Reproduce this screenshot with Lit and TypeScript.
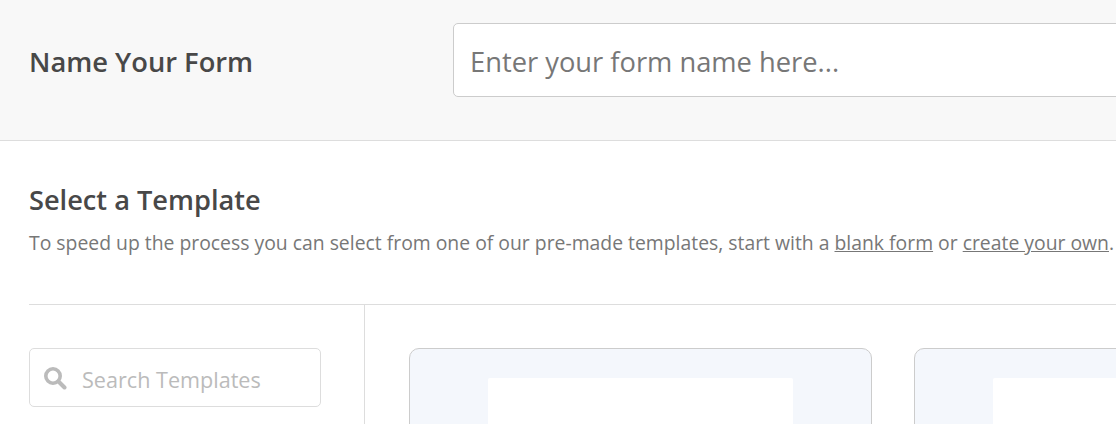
import { LitElement, html, css } from 'lit'
import { customElement } from 'lit/decorators.js'

@customElement('app-root')
export class AppRoot extends LitElement {
  static styles = css`
    :host {
      display: block;
      width: 1116px;
      height: 424px;
      overflow: hidden;
      background: #fff;
      font-family: 'Open Sans', sans-serif;
      color: #444;
    }
    .name-bar {
      display: flex;
      align-items: flex-start;
      height: 117px;
      padding: 23px 0 0 29px;
      background: #f8f8f8;
      border-bottom: 1px solid #ddd;
    }
    .name-label {
      width: 424px;
      flex-shrink: 0;
      padding-top: 21px;
      font-size: 27.3px;
      font-weight: 600;
      line-height: 36px;
      color: #484848;
    }
    .name-input {
      flex-shrink: 0;
      box-sizing: border-box;
      width: 800px;
      height: 74px;
      padding: 2px 16px 0;
      background: #fff;
      border: 1px solid #ccc;
      border-radius: 5px;
      font: 27.3px 'Open Sans', sans-serif;
      color: #444;
      outline: none;
    }
    .name-input::placeholder {
      color: #777;
      opacity: 1;
    }
    .intro {
      padding: 41px 0 0 29px;
      white-space: nowrap;
    }
    h2 {
      margin: 0;
      font-size: 27.2px;
      font-weight: 600;
      line-height: 36px;
      color: #484848;
    }
    p {
      margin: 12px 0 0;
      font-size: 19.37px;
      line-height: 26px;
      color: #777;
    }
    p a {
      color: #777;
      text-decoration: underline;
    }
    .picker {
      display: flex;
      margin: 48px 0 0 29px;
      border-top: 1px solid #ddd;
    }
    .sidebar {
      flex-shrink: 0;
      box-sizing: border-box;
      width: 336px;
      height: 200px;
      padding: 43px 0 0;
      border-right: 1px solid #ddd;
    }
    .search {
      display: flex;
      align-items: center;
      gap: 15px;
      box-sizing: border-box;
      width: 292px;
      height: 59px;
      padding: 0 13px;
      border: 1px solid #ddd;
      border-radius: 5px;
    }
    .search svg {
      flex-shrink: 0;
      width: 24px;
      height: 24px;
    }
    .search input {
      flex: 1;
      min-width: 0;
      padding: 3px 0 0;
      border: 0;
      outline: none;
      font: 21.6px 'Open Sans', sans-serif;
    }
    .search input::placeholder {
      color: #bbb;
      opacity: 1;
    }
    .cards {
      display: flex;
      gap: 42px;
      padding: 43px 0 0 44px;
    }
    .card {
      flex-shrink: 0;
      box-sizing: border-box;
      width: 463px;
      height: 200px;
      padding: 29px 78px 0;
      background: #f4f7fc;
      border: 1px solid #ccc;
      border-radius: 10px;
    }
    .sheet {
      height: 200px;
      background: #fff;
      border-radius: 2px;
    }
  `

  render() {
    return html`
      <div class="name-bar">
        <div class="name-label">Name Your Form</div>
        <input class="name-input" placeholder="Enter your form name here..." />
      </div>
      <div class="intro">
        <h2>Select a Template</h2>
        <p>
          To speed up the process you can select from one of our pre-made templates, start with a
          <a href="#">blank form</a> or <a href="#">create your own</a>.
        </p>
      </div>
      <div class="picker">
        <div class="sidebar">
          <label class="search">
            <svg viewBox="0 0 24 24" fill="none" stroke="#bbb" stroke-linecap="round">
              <circle cx="10" cy="10" r="7.2" stroke-width="3.6" />
              <path d="M16 16 L21.5 21.5" stroke-width="4" />
            </svg>
            <input placeholder="Search Templates" />
          </label>
        </div>
        <div class="cards">
          <div class="card"><div class="sheet"></div></div>
          <div class="card"><div class="sheet"></div></div>
        </div>
      </div>
    `
  }
}

declare global {
  interface HTMLElementTagNameMap {
    'app-root': AppRoot
  }
}
